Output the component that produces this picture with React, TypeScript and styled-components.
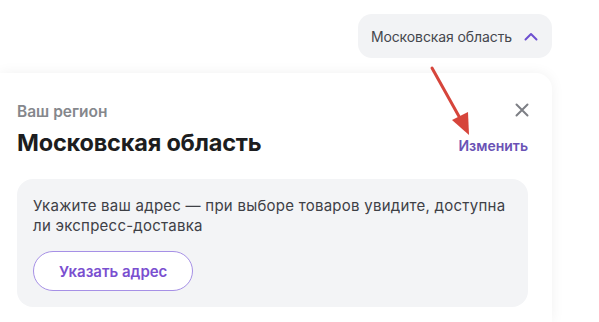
import React from 'react';
import styled, { createGlobalStyle } from 'styled-components';

const GlobalStyle = createGlobalStyle`
  html, body {
    margin: 0;
    padding: 0;
    background: #ffffff;
    font-family: Inter, "Noto Sans", sans-serif;
    -webkit-font-smoothing: antialiased;
  }
  * { box-sizing: border-box; }
`;

const Page = styled.div`
  position: relative;
  width: 599px;
  height: 322px;
  overflow: hidden;
  display: flex;
  flex-direction: column;
`;

const Header = styled.div`
  display: flex;
  justify-content: flex-end;
  padding: 14px 47px 0 0;
`;

const RegionPill = styled.button`
  display: flex;
  align-items: center;
  gap: 12px;
  height: 44px;
  padding: 0 14px 0 13px;
  border: none;
  border-radius: 14px;
  background: #f2f3f5;
  color: #45474d;
  font-family: inherit;
  font-size: 14px;
  letter-spacing: -0.1px;
  cursor: pointer;
`;

const Card = styled.div`
  margin-top: 15px;
  width: 552px;
  flex: 1;
  background: #ffffff;
  border-radius: 0 16px 0 0;
  box-shadow: 0 0 14px rgba(20, 20, 40, 0.06);
  padding: 29px 24px 0 17px;
`;

const TopRow = styled.div`
  display: flex;
  align-items: center;
  justify-content: space-between;
  height: 18px;
`;

const Label = styled.span`
  font-size: 15.5px;
  font-weight: 600;
  color: #85878c;
`;

const CloseButton = styled.button`
  display: flex;
  padding: 0;
  margin-right: -1px;
  margin-top: -3px;
  border: none;
  background: none;
  cursor: pointer;
`;

const TitleRow = styled.div`
  display: flex;
  align-items: baseline;
  justify-content: space-between;
  margin-top: 8px;
`;

const Title = styled.h2`
  margin: 0;
  font-size: 23.5px;
  font-weight: 700;
  letter-spacing: -0.2px;
  color: #1c1d20;
`;

const ChangeLink = styled.a`
  font-size: 14px;
  font-weight: 600;
  color: #6a52b5;
  text-decoration: none;
`;

const InfoBox = styled.div`
  margin-top: 22px;
  background: #f3f4f6;
  border-radius: 16px;
  padding: 17px 16px 16px 16px;
`;

const InfoText = styled.p`
  margin: 0;
  font-size: 15px;
  line-height: 20px;
  letter-spacing: 0.25px;
  color: #3e4046;
  max-width: 490px;
`;

const OutlineButton = styled.button`
  margin-top: 15px;
  height: 40px;
  padding: 0 25px;
  border: 1px solid #a690e6;
  border-radius: 20px;
  background: #ffffff;
  color: #7a4fd0;
  font-family: inherit;
  font-size: 15px;
  font-weight: 600;
  cursor: pointer;
`;

const Arrow = styled.svg`
  position: absolute;
  left: 425px;
  top: 62px;
  pointer-events: none;
`;

export default function App() {
  return (
    <Page>
      <GlobalStyle />
      <Header>
        <RegionPill>
          Московская область
          <svg width="14" height="9" viewBox="0 0 14 9" fill="none">
            <path d="M1.5 7.5L7 2L12.5 7.5" stroke="#6d4fd0" strokeWidth="2" strokeLinecap="round" strokeLinejoin="round" />
          </svg>
        </RegionPill>
      </Header>
      <Card>
        <TopRow>
          <Label>Ваш регион</Label>
          <CloseButton aria-label="Закрыть">
            <svg width="14" height="14" viewBox="0 0 14 14" fill="none">
              <path d="M1.5 1.5L12.5 12.5M12.5 1.5L1.5 12.5" stroke="#7d7f85" strokeWidth="2" strokeLinecap="round" />
            </svg>
          </CloseButton>
        </TopRow>
        <TitleRow>
          <Title>Московская область</Title>
          <ChangeLink href="#">Изменить</ChangeLink>
        </TitleRow>
        <InfoBox>
          <InfoText>
            Укажите ваш адрес — при выборе товаров увидите, доступна ли экспресс-доставка
          </InfoText>
          <OutlineButton>Указать адрес</OutlineButton>
        </InfoBox>
      </Card>
      <Arrow width="60" height="80" viewBox="0 0 60 80">
        <line x1="7" y1="6" x2="36" y2="58" stroke="#d6453b" strokeWidth="3" strokeLinecap="round" />
        <polygon points="44,73 27,58 43,50" fill="#d6453b" />
      </Arrow>
    </Page>
  );
}
